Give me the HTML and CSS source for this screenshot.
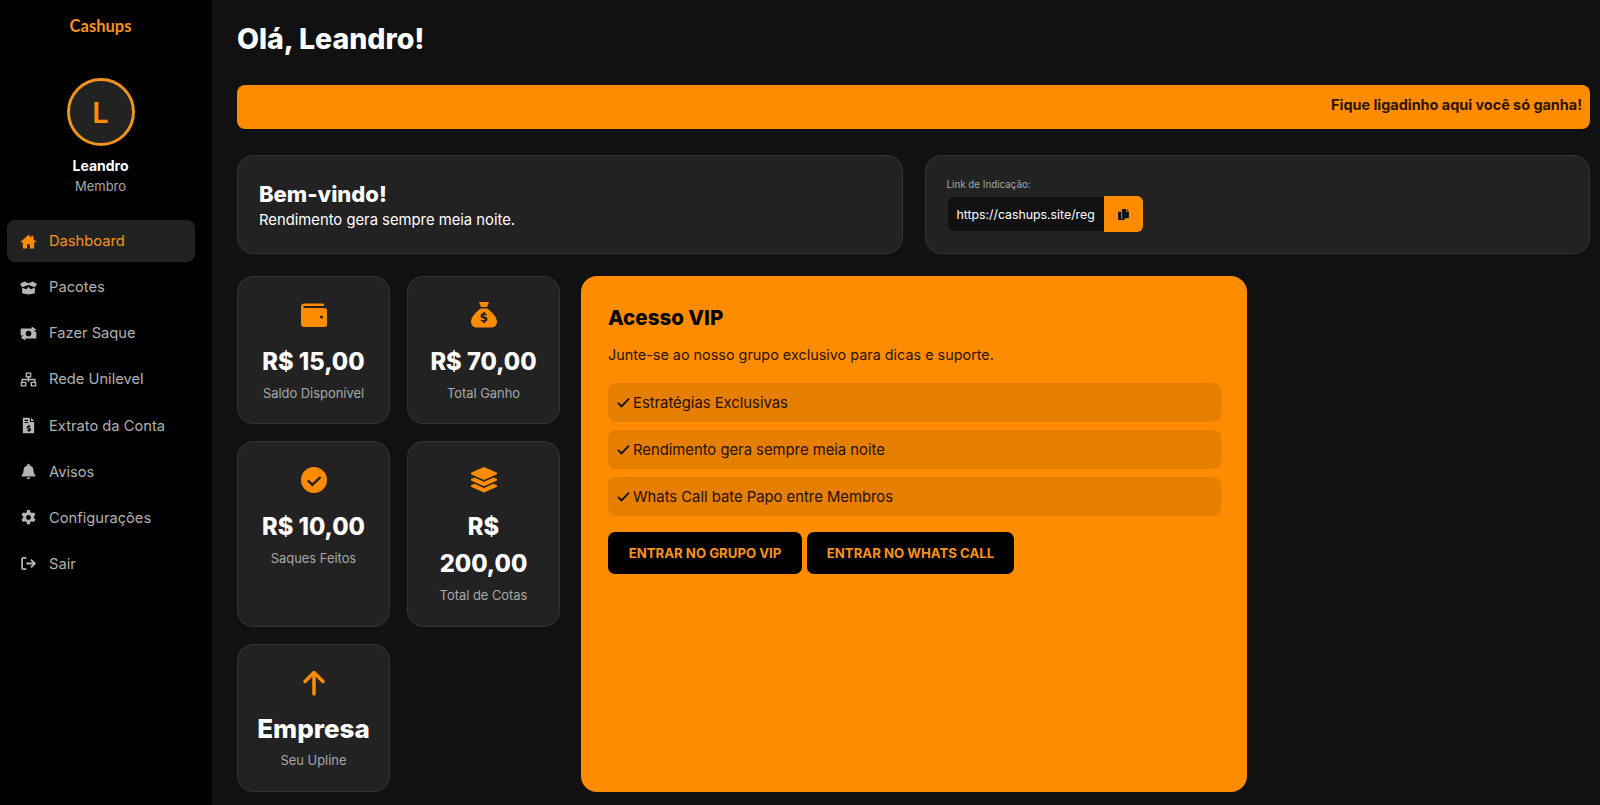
FILE: index.html
```html
<!DOCTYPE html>
<html lang="pt-BR">
<head>
    <meta charset="utf-8">
    <title>Cashups</title>
    <link rel="stylesheet" href="styles.css">
</head>
<body>
    <div class="sidebar">
        <div class="logo">Cashups</div>
        <div class="avatar">L</div>
        <div class="user_name">Leandro</div>
        <div class="user_role">Membro</div>
        <div class="nav">
            <a class="nav_item active">
                <svg class="nav_icon" viewBox="0 0 24 24"><path d="M12 2.5 1 12.2l1.4 1.6L4 12.4V21a1 1 0 0 0 1 1h5v-6h4v6h5a1 1 0 0 0 1-1v-8.6l1.6 1.4 1.4-1.6L19 9.3V4h-3v2.6z"/></svg>
                Dashboard
            </a>
            <a class="nav_item">
                <svg class="nav_icon" viewBox="0 0 24 24"><path d="M0 7 6 3.500l6 2.500 6-2.500 6 3.500-3 4.500-9-3-9 3z"/><path d="M3 12.500l6 2 3-3.500 3 3.500 6-2V19a1.500 1.500 0 0 1-1 1.400L12 22l-8-1.600A1.500 1.500 0 0 1 3 19z"/></svg>
                Pacotes
            </a>
            <a class="nav_item">
                <svg class="nav_icon" viewBox="0 0 24 24"><path fill-rule="evenodd" d="M1 5h15.500V2l6.500 4.500-4 2.800H23V19H7.500v3L1 17.500l4-2.800H1zm11 3a4 4 0 1 0 0 8 4 4 0 0 0 0-8z"/></svg>
                Fazer Saque
            </a>
            <a class="nav_item">
                <svg class="nav_icon" viewBox="0 0 24 24"><path fill-rule="evenodd" d="M8 2h8v7h-3v2h9v4h-2v-2h-7v2h-2v-2H4v2H2v-4h9V9H8zm2 2v3h4V4zM1 15h8v7H1zm2 2v3h4v-3zM15 15h8v7h-8zm2 2v3h4v-3z"/></svg>
                Rede Unilevel
            </a>
            <a class="nav_item">
                <svg class="nav_icon" viewBox="0 0 24 24"><path fill-rule="evenodd" d="M4 1h10v6h6v15a1 1 0 0 1-1 1H5a1 1 0 0 1-1-1zm2.500 3v1.500h5V4zm0 3v1.500h5V7zM12 11v1.200c-1.500.3-2.500 1.200-2.500 2.400 0 2.600 3.500 1.900 3.500 3 0 .6-1.500.6-3 0l-.5 1.500c.8.300 1.600.5 2.500.5V21h1.500v-1.100c1.300-.3 2-1.200 2-2.300 0-2.500-3.500-1.900-3.500-3 0-.6 1.200-.6 2.500-.1l.5-1.500c-.6-.2-1.300-.4-1.500-.4V11z"/><path d="M15.500 1 20 5.500h-4.500z"/></svg>
                Extrato da Conta
            </a>
            <a class="nav_item">
                <svg class="nav_icon" viewBox="0 0 24 24"><path d="M12 1a1.700 1.700 0 0 0-1.700 1.700v.8C7 4.200 5 7 5 10.200c0 3.800-1 5.300-2.600 7A1 1 0 0 0 3 19h18a1 1 0 0 0 .6-1.800C20 15.500 19 14 19 10.200c0-3.200-2-6-5.300-6.700v-.8A1.700 1.700 0 0 0 12 1zM9.500 20.500a2.500 2.500 0 0 0 5 0z"/></svg>
                Avisos
            </a>
            <a class="nav_item">
                <svg class="nav_icon" viewBox="0 0 24 24"><path fill-rule="evenodd" d="M10 1.500h4l.7 3 2.100 1.200 3-.9 2 3.400-2.200 2.100v2.400l2.200 2.100-2 3.400-3-.9-2.100 1.200-.7 3h-4l-.7-3-2.100-1.200-3 .9-2-3.400 2.200-2.100v-2.400L2.200 8.200l2-3.400 3 .9 2.100-1.200zM12 8.500a3.500 3.500 0 1 0 0 7 3.500 3.500 0 0 0 0-7z"/></svg>
                Configurações
            </a>
            <a class="nav_item">
                <svg class="nav_icon outline" viewBox="0 0 24 24"><path d="M9 4H4.500A1.500 1.500 0 0 0 3 5.500v13A1.500 1.500 0 0 0 4.500 20H9M9 12h12M15.500 6.500 21 12l-5.500 5.500"/></svg>
                Sair
            </a>
        </div>
    </div>

    <div class="main">
        <h1 class="page_title">Olá, Leandro!</h1>
        <div class="banner">Fique ligadinho aqui você só ganha!</div>

        <div class="top_row">
            <div class="card welcome">
                <h2>Bem-vindo!</h2>
                <p>Rendimento gera sempre meia noite.</p>
            </div>
            <div class="card referral">
                <label class="ref_label">Link de Indicação:</label>
                <div class="ref_group">
                    <input class="ref_input" type="text" readonly value="https://cashups.site/register?ref=leandro">
                    <div class="ref_button">
                        <svg viewBox="0 0 24 24"><path d="M9 2h8v5h5v11a1 1 0 0 1-1 1H10a1 1 0 0 1-1-1zM18.500 2 22 5.500h-3.500zM2 7h5.500v12.500h7V22H3a1 1 0 0 1-1-1z"/></svg>
                    </div>
                </div>
            </div>
        </div>

        <div class="bottom_row">
            <div class="stats">
                <div class="card stat">
                    <svg class="stat_icon" viewBox="0 0 26 26"><path fill-rule="evenodd" d="M3.500 1.500h18a1.500 1.500 0 0 1 1.500 1.500v1H3.200a1 1 0 0 0 0 2H23.500A2.500 2.500 0 0 1 26 8.500v14a2.500 2.500 0 0 1-2.500 2.500h-20A3.500 3.500 0 0 1 0 21.500V5a3.500 3.500 0 0 1 3.500-3.500zM20.500 13.500a1.500 1.500 0 1 0 0 3 1.500 1.500 0 0 0 0-3z"/></svg>
                    <div class="stat_value">R$ 15,00</div>
                    <div class="stat_label">Saldo Disponível</div>
                </div>
                <div class="card stat">
                    <svg class="stat_icon" viewBox="0 0 26 26"><path fill-rule="evenodd" d="M8 0h10l-2 5h-6zM9.500 6.500h7C21 10 26 15 26 20a5.500 5.500 0 0 1-5.500 5.500h-15A5.500 5.500 0 0 1 0 20C0 15 5 10 9.500 6.500zM12.200 10v1.300c-1.600.3-2.700 1.300-2.700 2.700 0 2.900 4.300 2.200 4.300 3.400 0 .8-1.800.7-3.600 0l-.6 1.700c1 .4 1.800.6 2.600.6V21h1.800v-1.300c1.600-.3 2.500-1.300 2.500-2.500 0-2.900-4.200-2.200-4.200-3.400 0-.7 1.500-.7 3-.1l.6-1.700c-.8-.3-1.400-.5-1.900-.5V10z"/></svg>
                    <div class="stat_value">R$ 70,00</div>
                    <div class="stat_label">Total Ganho</div>
                </div>
                <div class="card stat">
                    <svg class="stat_icon" viewBox="0 0 26 26"><path fill-rule="evenodd" d="M13 0a13 13 0 1 0 0 26 13 13 0 0 0 0-26zm5.800 9.200 1.600 1.600-9 8.600-5.500-5.200 1.600-1.700 3.900 3.600z"/></svg>
                    <div class="stat_value">R$ 10,00</div>
                    <div class="stat_label">Saques Feitos</div>
                </div>
                <div class="card stat">
                    <svg class="stat_icon" viewBox="0 0 26 26"><path d="M13 0 26 5.800v1.500L13 13 0 7.300V5.800z"/><path d="M3.500 10.500 13 14.700l9.500-4.200L26 12v1.500L13 19.200 0 13.500V12z"/><path d="M3.500 16.800 13 21l9.500-4.200 3.500 1.500v1.500L13 25.500 0 19.800v-1.500z"/></svg>
                    <div class="stat_value">R$<br>200,00</div>
                    <div class="stat_label">Total de Cotas</div>
                </div>
                <div class="card stat">
                    <svg class="stat_icon arrow" viewBox="0 0 26 26"><path d="M13 24V3M4 11.500 13 2.500l9 9"/></svg>
                    <div class="stat_value upline">Empresa</div>
                    <div class="stat_label">Seu Upline</div>
                </div>
            </div>

            <div class="vip">
                <h3>Acesso VIP</h3>
                <p>Junte-se ao nosso grupo exclusivo para dicas e suporte.</p>
                <div class="vip_item"><svg viewBox="0 0 14 12"><path d="M1 6.500 4.800 10.300 13 1.800"/></svg>Estratégias Exclusivas</div>
                <div class="vip_item"><svg viewBox="0 0 14 12"><path d="M1 6.500 4.800 10.300 13 1.800"/></svg>Rendimento gera sempre meia noite</div>
                <div class="vip_item"><svg viewBox="0 0 14 12"><path d="M1 6.500 4.800 10.300 13 1.800"/></svg>Whats Call bate Papo entre Membros</div>
                <div class="vip_buttons">
                    <a class="vip_button wide_1">ENTRAR NO GRUPO VIP</a>
                    <a class="vip_button wide_2">ENTRAR NO WHATS CALL</a>
                </div>
            </div>
        </div>
    </div>
</body>
</html>
```

FILE: styles.css
```css
body {
    margin: 0;
    height: 805px;
    overflow: hidden;
    display: flex;
    background: #111111;
    color: #ffffff;
    font-family: "Inter", "Liberation Sans", sans-serif;
}

h1, h2, h3, p {
    margin: 0;
}

/* sidebar */
.sidebar {
    width: 212px;
    box-sizing: border-box;
    padding-right: 11px;
    flex-shrink: 0;
    background: #000000;
    display: flex;
    flex-direction: column;
    align-items: center;
}

.logo {
    margin-top: 16px;
    height: 21px;
    line-height: 21px;
    font-family: "Lato", sans-serif;
    font-weight: 700;
    font-size: 16.500px;
    color: #f7931e;
}

.avatar {
    margin-top: 41px;
    width: 62px;
    height: 62px;
    border: 3px solid #f0921e;
    border-radius: 50%;
    background: #222222;
    color: #ff8c00;
    font-size: 29px;
    font-weight: 600;
    display: flex;
    align-items: center;
    justify-content: center;
}

.user_name {
    margin-top: 10px;
    line-height: 20px;
    font-size: 14px;
    font-weight: 700;
}

.user_role {
    line-height: 20px;
    font-size: 13px;
    color: #a8a8a8;
}

.nav {
    margin-top: 24px;
    margin-left: 1px;
    width: 188px;
    display: flex;
    flex-direction: column;
    gap: 4.150px;
}

.nav_item {
    height: 42px;
    padding-left: 13px;
    border-radius: 8px;
    display: flex;
    align-items: center;
    gap: 12px;
    font-size: 14.700px;
    color: #b0b0b0;
}

.nav_item.active {
    background: #222222;
    color: #f7931e;
}

.nav_icon {
    width: 17px;
    height: 17px;
    fill: #b5b5b5;
}

.nav_item.active .nav_icon {
    fill: #ff8c00;
}

.nav_icon.outline {
    fill: none;
    stroke: #b5b5b5;
    stroke-width: 2.500;
}

/* main area */
.main {
    flex: 1;
    padding: 0 10px 0 25px;
}

.page_title {
    margin-top: 21px;
    line-height: 35px;
    font-size: 28.500px;
    font-weight: 800;
}

.banner {
    margin-top: 29px;
    height: 44px;
    line-height: 40px;
    padding-right: 8px;
    border-radius: 8px;
    background: #ff8c00;
    color: #2b1400;
    text-align: right;
    font-size: 14.400px;
    font-weight: 700;
}

.card {
    background: #222222;
    border: 1px solid #3a332a;
    border-radius: 16px;
    box-sizing: border-box;
}

.top_row {
    margin-top: 26px;
    display: flex;
    gap: 22px;
}

.top_row .card {
    flex: 1;
    height: 99px;
}

.welcome {
    padding: 25px 21px 0;
}

.welcome h2 {
    line-height: 26px;
    margin-bottom: 1px;
    font-size: 22px;
    font-weight: 800;
}

.welcome p {
    line-height: 24px;
    font-size: 14.800px;
}

.referral {
    padding: 21px 21px 0;
}

.ref_label {
    display: block;
    height: 15px;
    line-height: 15px;
    font-size: 9.800px;
    color: #a8a8a8;
}

.ref_group {
    margin-top: 4px;
    display: flex;
}

.ref_input {
    width: 157px;
    height: 36px;
    box-sizing: border-box;
    padding: 0 9px;
    background: #111111;
    border: 1px solid #2e2415;
    border-right: 0;
    border-radius: 6px 0 0 6px;
    color: #ffffff;
    font-family: "Inter", sans-serif;
    font-size: 12.300px;
    outline: none;
}

.ref_button {
    width: 39px;
    height: 36px;
    background: #ff8c00;
    border-radius: 0 6px 6px 0;
    display: flex;
    align-items: center;
    justify-content: center;
}

.ref_button svg {
    width: 13px;
    height: 13px;
    fill: #111111;
}

.bottom_row {
    margin-top: 22px;
    display: flex;
    gap: 21px;
    align-items: flex-start;
}

.stats {
    display: grid;
    grid-template-columns: 153px 153px;
    grid-template-rows: 148px 186px 148px;
    gap: 17px;
}

.stat {
    padding-top: 25px;
    text-align: center;
}

.stat_icon {
    display: block;
    margin: 0 auto;
    width: 26px;
    height: 26px;
    fill: #ff8c00;
}

.stat_icon.arrow {
    fill: none;
    stroke: #ff8c00;
    stroke-width: 3.500;
    stroke-linecap: round;
    stroke-linejoin: round;
}

.stat_value {
    margin-top: 15px;
    line-height: 37px;
    font-size: 23.700px;
    font-weight: 800;
}

.stat_value.upline {
    margin-top: 14px;
    font-size: 26px;
}

.stat_label {
    margin-top: 3.500px;
    line-height: 20px;
    font-size: 12.900px;
    color: #a8a8a8;
}

/* vip box */
.vip {
    width: 666px;
    height: 516px;
    box-sizing: border-box;
    padding: 29px 26px 0 27px;
    background: #ff8c00;
    border-radius: 16px;
    color: #111111;
}

.vip h3 {
    line-height: 26px;
    font-size: 20.500px;
    font-weight: 800;
    color: #000000;
}

.vip p {
    margin-top: 12px;
    line-height: 24px;
    font-size: 14.400px;
    margin-bottom: 16px;
    color: #2b1400;
}

.vip_item {
    height: 39px;
    margin-bottom: 8px;
    padding-left: 9px;
    border-radius: 8px;
    background: #e67e00;
    display: flex;
    align-items: center;
    gap: 3px;
    font-size: 14.800px;
    color: #1f1000;
}

.vip_item svg {
    width: 13px;
    height: 11px;
    fill: none;
    stroke: #111111;
    stroke-width: 2;
}

.vip_buttons {
    margin-top: 16px;
    display: flex;
    gap: 5px;
}

.vip_button {
    height: 42px;
    line-height: 42px;
    border-radius: 7px;
    background: #000000;
    color: #f7931e;
    text-align: center;
    font-size: 13.200px;
    font-weight: 700;
}

.wide_1 {
    width: 194px;
}

.wide_2 {
    width: 207px;
}
```
